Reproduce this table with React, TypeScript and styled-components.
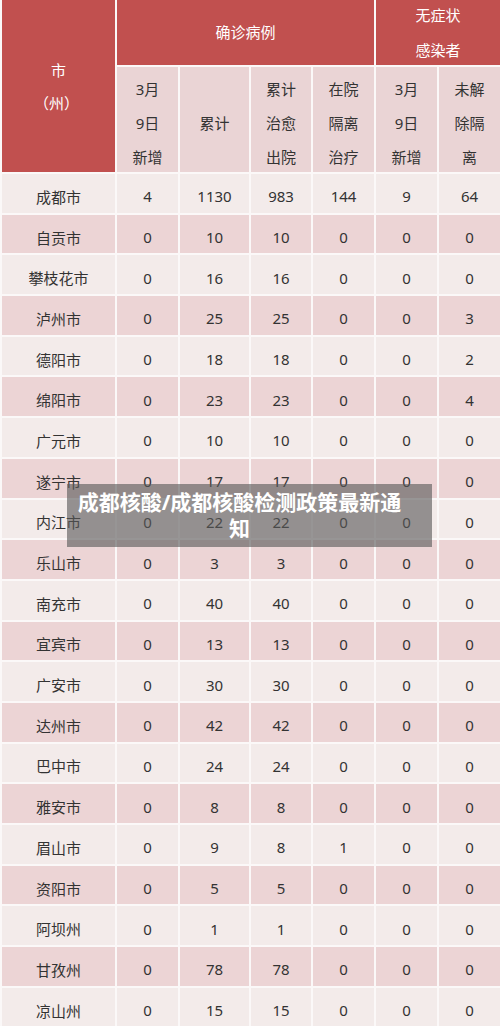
import * as React from "react";
import styled, { createGlobalStyle } from "styled-components";

const GlobalStyle = createGlobalStyle`
    html, body {
        margin: 0;
        padding: 0;
        background: #ffffff;
    }
    body {
        font-family: "Noto Sans", "Noto Sans CJK SC", sans-serif;
    }
`;

const rows: [string, number, number, number, number, number, number][] = [
    ["成都市", 4, 1130, 983, 144, 9, 64],
    ["自贡市", 0, 10, 10, 0, 0, 0],
    ["攀枝花市", 0, 16, 16, 0, 0, 0],
    ["泸州市", 0, 25, 25, 0, 0, 3],
    ["德阳市", 0, 18, 18, 0, 0, 2],
    ["绵阳市", 0, 23, 23, 0, 0, 4],
    ["广元市", 0, 10, 10, 0, 0, 0],
    ["遂宁市", 0, 17, 17, 0, 0, 0],
    ["内江市", 0, 22, 22, 0, 0, 0],
    ["乐山市", 0, 3, 3, 0, 0, 0],
    ["南充市", 0, 40, 40, 0, 0, 0],
    ["宜宾市", 0, 13, 13, 0, 0, 0],
    ["广安市", 0, 30, 30, 0, 0, 0],
    ["达州市", 0, 42, 42, 0, 0, 0],
    ["巴中市", 0, 24, 24, 0, 0, 0],
    ["雅安市", 0, 8, 8, 0, 0, 0],
    ["眉山市", 0, 9, 8, 1, 0, 0],
    ["资阳市", 0, 5, 5, 0, 0, 0],
    ["阿坝州", 0, 1, 1, 0, 0, 0],
    ["甘孜州", 0, 78, 78, 0, 0, 0],
    ["凉山州", 0, 15, 15, 0, 0, 0]
];

const subHeads = [
    ["3月", "9日", "新增"],
    ["累计"],
    ["累计", "治愈", "出院"],
    ["在院", "隔离", "治疗"],
    ["3月", "9日", "新增"],
    ["未解", "除隔", "离"]
];

const App: React.FC = () => {
    return (
        <>
            <GlobalStyle />
            <Page>
                <Table>
                    <CityHead>
                        <span>市</span>
                        <span>（州）</span>
                    </CityHead>
                    <GroupHead span={4}>确诊病例</GroupHead>
                    <GroupHead span={2}>
                        <span>无症状</span>
                        <span>感染者</span>
                    </GroupHead>
                    {subHeads.map((lines, i) => (
                        <SubHead key={i}>
                            {lines.map(l => (
                                <span key={l}>{l}</span>
                            ))}
                        </SubHead>
                    ))}
                    {rows.map((row, r) =>
                        row.map((v, c) => (
                            <Cell key={`${r}-${c}`} even={r % 2 === 1}>
                                {v}
                            </Cell>
                        ))
                    )}
                </Table>
                <Caption>成都核酸/成都核酸检测政策最新通知</Caption>
            </Page>
        </>
    );
};

const Page = styled.div`
    position: relative;
    width: 500px;
    height: 1032px;
    overflow: hidden;
    background: #ffffff;
`;

const Table = styled.div`
    display: grid;
    grid-template-columns: 113px 61px 69px 60px 61px 61px 61px;
    grid-template-rows: 65px 105px;
    grid-auto-rows: 38.7px;
    column-gap: 2px;
    row-gap: 2px;
    padding-left: 2px;
    background: #fbf8f8;
`;

const CityHead = styled.div`
    grid-row: span 2;
    background: #c1504f;
    color: #ffffff;
    font-size: 15px;
    display: flex;
    flex-direction: column;
    align-items: center;
    justify-content: center;
    gap: 12px;
    & span:last-child {
        margin-left: -4px;
    }
`;

const GroupHead = styled.div<{ span: number }>`
    grid-column: span ${p => p.span};
    background: #c1504f;
    color: #ffffff;
    font-size: 15px;
    display: flex;
    flex-direction: column;
    align-items: center;
    justify-content: center;
    gap: 14px;
    padding-bottom: 2px;
`;

const SubHead = styled.div`
    background: #ead4d5;
    color: #333333;
    font-size: 15px;
    display: flex;
    flex-direction: column;
    align-items: center;
    justify-content: center;
    gap: 13px;
    line-height: 21px;
    padding-top: 7px;
    box-sizing: border-box;
`;

const Cell = styled.div<{ even: boolean }>`
    background: ${p => (p.even ? "#ecd4d5" : "#f3ebea")};
    color: #333333;
    font-size: 15px;
    display: flex;
    align-items: center;
    justify-content: center;
    padding-top: 6px;
    box-sizing: border-box;
`;

const Caption = styled.div`
    position: absolute;
    left: 67px;
    top: 484px;
    width: 365px;
    height: 63px;
    box-sizing: border-box;
    padding: 5px 28px 0 8px;
    background: rgba(88, 88, 88, 0.62);
    color: #ffffff;
    font-size: 21px;
    font-weight: 700;
    line-height: 26px;
    text-align: center;
`;

export default App;
